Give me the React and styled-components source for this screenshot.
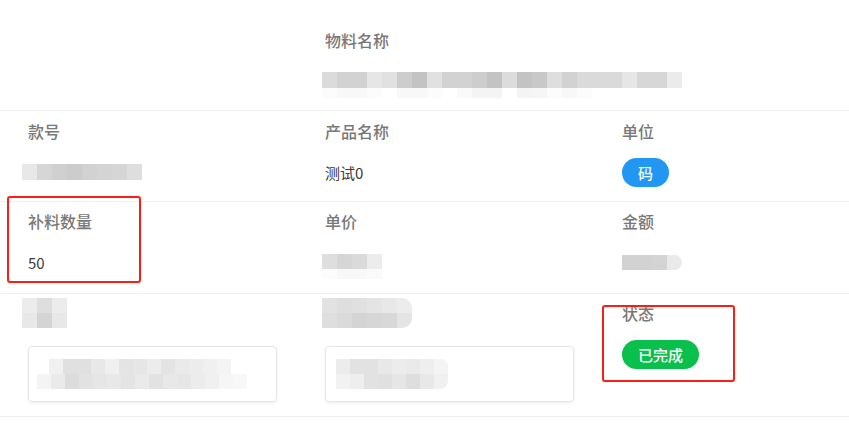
import React from "react";
import styled, { createGlobalStyle } from "styled-components";

const GlobalStyle = createGlobalStyle`
  html, body {
    margin: 0;
    padding: 0;
    background: #fff;
    font-family: "Noto Sans CJK SC", "Noto Sans", sans-serif;
  }
`;

const Page = styled.div`
  position: relative;
  width: 849px;
  height: 438px;
  overflow: hidden;
  background: #fff;
`;

const Row = styled.div`
  display: grid;
  grid-template-columns: 297px 297px 1fr;
  padding: ${(p) => p.$pad || "10px 0 15px 28px"};
  border-bottom: 1px solid #eeeeee;
  height: ${(p) => p.$h}px;
  box-sizing: border-box;
`;

const Field = styled.div`
  display: flex;
  flex-direction: column;
  align-items: flex-start;
  gap: ${(p) => p.$gap || 15}px;
`;

const Label = styled.div`
  height: 20px;
  line-height: 20px;
  font-size: 16px;
  font-weight: 500;
  color: #787878;
  margin-top: ${(p) => p.$mt || 0}px;
`;

const Value = styled.div`
  height: 30px;
  display: flex;
  align-items: center;
  font-size: 15px;
  color: #3a3a3a;
`;

const Tag = styled.span`
  display: inline-flex;
  align-items: center;
  height: 29px;
  padding: 0 16px;
  border-radius: 15px;
  font-size: 15px;
  font-weight: 500;
  color: #fff;
  background: ${(p) => p.$color};
`;

const Card = styled.div`
  width: 249px;
  height: 56px;
  box-sizing: border-box;
  border: 1px solid #e6e6e6;
  border-radius: 4px;
  box-shadow: 0 1px 3px rgba(0, 0, 0, 0.08);
  display: flex;
  align-items: center;
  padding-left: 8px;
`;

const MosaicGrid = styled.div`
  display: flex;
  flex-direction: column;
  margin-left: ${(p) => p.$ml ?? -6}px;
  margin-top: ${(p) => p.$mt || 0}px;
  border-radius: 0 ${(p) => p.$r || 0}px ${(p) => p.$r || 0}px 0;
  overflow: hidden;
`;

const MosaicRow = styled.div`
  display: flex;
  padding-left: ${(p) => p.$indent || 0}px;
`;

const Cell = styled.div`
  width: ${(p) => p.$w}px;
  height: ${(p) => p.$h}px;
`;

const Annotation = styled.div`
  position: absolute;
  border: 2px solid #fa1e14;
  border-radius: 3px;
  box-sizing: border-box;
`;

const g = (v) => `rgb(${v},${v},${v})`;

function Mosaic({ rows, w = 15, ml, mt, r }) {
  return (
    <MosaicGrid $ml={ml} $mt={mt} $r={r}>
      {rows.map((row, i) => (
        <MosaicRow key={i} $indent={row.indent}>
          {row.cells.map((c, j) => (
            <Cell key={j} $w={w} $h={row.h} style={{ background: g(c) }} />
          ))}
        </MosaicRow>
      ))}
    </MosaicGrid>
  );
}

const nameRows = [
  {
    h: 16,
    cells: [219, 210, 210, 230, 225, 205, 195, 225, 210, 210, 205, 195, 220, 195, 200, 222, 210, 218, 218, 218, 230, 215, 215, 235],
  },
  {
    h: 10,
    cells: [252, 248, 248, 252, 255, 248, 248, 252, 255, 250, 244, 244, 255, 244, 246, 252, 248, 252, 255, 255, 255, 255, 255, 255],
  },
];

const codeRows = [{ h: 16, cells: [232, 214, 208, 204, 210, 212, 214, 222] }];

const priceRows = [
  { h: 15, cells: [222, 214, 218, 236] },
  { h: 10, cells: [252, 248, 248, 250] },
];

const amountRows = [{ h: 15, cells: [210, 210, 212, 234] }];

const lab1Rows = [
  { h: 15, cells: [236, 222, 236] },
  { h: 15, cells: [232, 212, 232] },
];

const lab2Rows = [
  { h: 15, cells: [226, 222, 224, 228, 232, 236] },
  { h: 15, cells: [222, 218, 212, 214, 216, 228] },
];

const card1Rows = [
  { h: 15, indent: 12, cells: [240, 224, 224, 232, 240, 228, 230, 236, 228, 234, 236, 240, 244] },
  { h: 15, indent: 0, cells: [244, 234, 220, 226, 230, 232, 228, 234, 226, 232, 230, 236, 240, 246, 248] },
];

const card2Rows = [
  { h: 15, indent: 0, cells: [236, 226, 226, 232, 236, 234, 238, 244] },
  { h: 15, indent: 0, cells: [242, 238, 226, 224, 230, 222, 232, 240] },
];

export default function App() {
  return (
    <Page>
      <GlobalStyle />
      <Row $h={111} $pad="30px 0 0 28px">
        <div />
        <Field $gap={16}>
          <Label>物料名称</Label>
          <Mosaic rows={nameRows} mt={6} ml={-3} />
        </Field>
        <div />
      </Row>
      <Row $h={91}>
        <Field $gap={16}>
          <Label>款号</Label>
          <Value>
            <Mosaic rows={codeRows} />
          </Value>
        </Field>
        <Field $gap={16}>
          <Label>产品名称</Label>
          <Value>测试0</Value>
        </Field>
        <Field $gap={16}>
          <Label>单位</Label>
          <Value>
            <Tag $color="#2196f3">码</Tag>
          </Value>
        </Field>
      </Row>
      <Row $h={92} $pad="9px 0 15px 28px">
        <Field $gap={16}>
          <Label>补料数量</Label>
          <Value>50</Value>
        </Field>
        <Field $gap={16}>
          <Label>单价</Label>
          <Value>
            <Mosaic rows={priceRows} ml={-3} mt={8} />
          </Value>
        </Field>
        <Field $gap={16}>
          <Label>金额</Label>
          <Value>
            <Mosaic rows={amountRows} ml={0} r={8} />
          </Value>
        </Field>
      </Row>
      <Row $h={123} $pad="4px 0 15px 28px">
        <Field $gap={18}>
          <Mosaic rows={lab1Rows} />
          <Card>
            <Mosaic rows={card1Rows} w={14} ml={0} />
          </Card>
        </Field>
        <Field $gap={18}>
          <Mosaic rows={lab2Rows} ml={-3} r={10} />
          <Card>
            <Mosaic rows={card2Rows} w={14} ml={2} r={8} />
          </Card>
        </Field>
        <Field $gap={17}>
          <Label $mt={5}>状态</Label>
          <Tag $color="#08c04b">已完成</Tag>
        </Field>
      </Row>
      <Annotation style={{ left: 7, top: 196, width: 134, height: 87 }} />
      <Annotation style={{ left: 602, top: 305, width: 133, height: 77 }} />
    </Page>
  );
}
